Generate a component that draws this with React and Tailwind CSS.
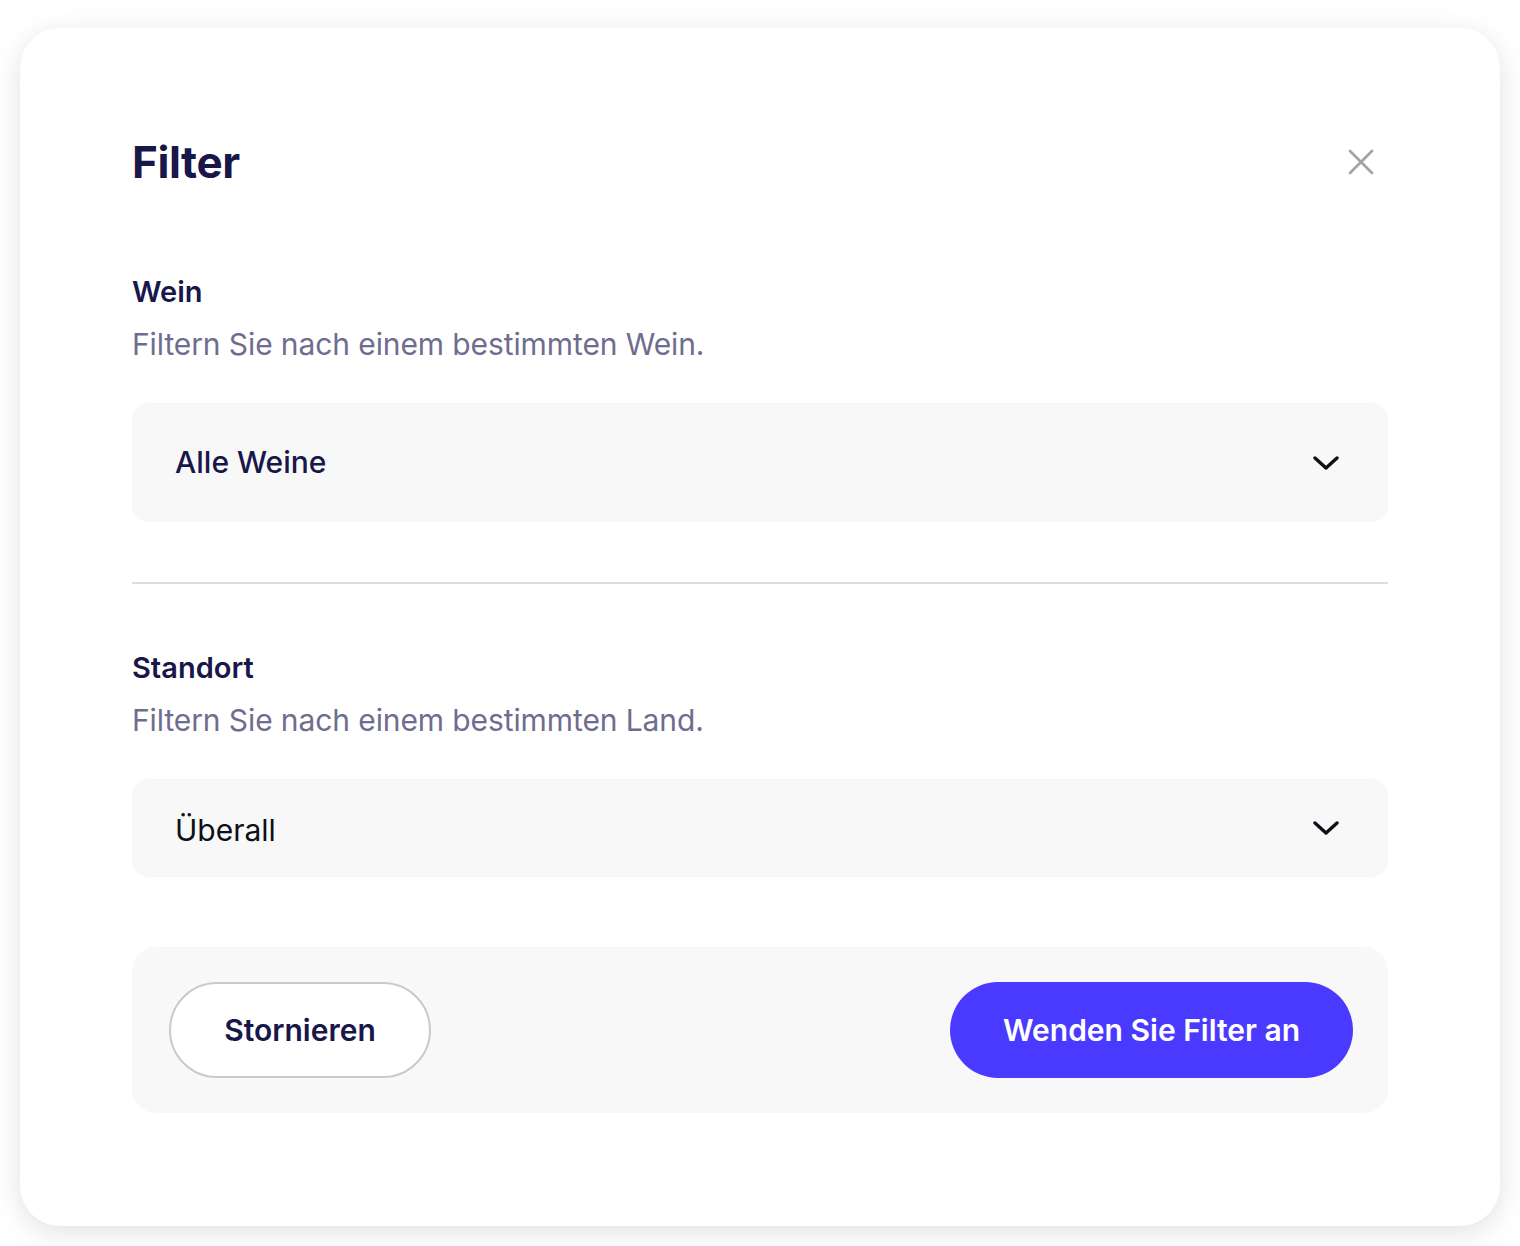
import React from "react";

function Chevron() {
    return (
        <svg width="26" height="14" viewBox="0 0 26 14" fill="none" className="shrink-0">
            <path d="M2 2 13 12 24 2" stroke="#0f0f1a" strokeWidth="3.4" strokeLinecap="round" strokeLinejoin="round" />
        </svg>
    );
}

function CloseIcon() {
    return (
        <svg width="26" height="26" viewBox="0 0 26 26" fill="none">
            <path d="M2 2 24 24M24 2 2 24" stroke="#a3a3ab" strokeWidth="2.8" strokeLinecap="round" />
        </svg>
    );
}

function Section({ label, hint, children }) {
    return (
        <div>
            <div className="text-[29px] leading-[36px] font-semibold text-[#19164a]">{label}</div>
            <div className="mt-[16px] text-[30px] leading-[36px] text-[#6f6d8f] tracking-[-0.1px]">{hint}</div>
            {children}
        </div>
    );
}

export default function App() {
    return (
        <div className="min-h-[1246px] bg-white pt-[28px] px-[20px] pb-[20px]" style={{ fontFamily: "Inter, 'Liberation Sans', sans-serif" }}>
            <div className="rounded-[40px] bg-white shadow-[0_6px_28px_rgba(0,0,0,0.12)] px-[112px] pt-[108px] pb-[113px]">
                {/* Header */}
                <div className="flex items-center justify-between h-[52px]">
                    <h1 className="text-[44px] leading-[52px] font-bold text-[#19164a] tracking-[-0.4px]">Filter</h1>
                    <button className="mr-[14px]"><CloseIcon /></button>
                </div>

                {/* Wein */}
                <div className="mt-[86px]">
                    <Section label="Wein" hint="Filtern Sie nach einem bestimmten Wein.">
                        <div className="mt-[41px] h-[119px] rounded-[16px] bg-[#f8f8f8] pl-[43px] pr-[49px] flex items-center justify-between">
                            <span className="text-[30px] font-medium text-[#19164a]">Alle Weine</span>
                            <Chevron />
                        </div>
                    </Section>
                </div>

                <div className="mt-[60px] h-[2px] bg-[#dddde0]" />

                {/* Standort */}
                <div className="mt-[66px]">
                    <Section label="Standort" hint="Filtern Sie nach einem bestimmten Land.">
                        <div className="mt-[41px] h-[98px] rounded-[16px] bg-[#f8f8f8] pl-[43px] pr-[49px] flex items-center justify-between">
                            <span className="text-[30px] text-[#0f0f1a] mt-[4px]">Überall</span>
                            <Chevron />
                        </div>
                    </Section>
                </div>

                {/* Footer */}
                <div className="mt-[70px] rounded-[24px] bg-[#f8f8f8] pl-[37px] pr-[35px] py-[35px] flex items-center justify-between">
                    <button className="h-[96px] w-[262px] rounded-full border-2 border-[#c9c9ce] bg-white text-[30px] font-semibold text-[#19164a]">
                        Stornieren
                    </button>
                    <button className="h-[96px] w-[403px] rounded-full bg-[#4a3aff] text-[30px] font-semibold text-white">
                        Wenden Sie Filter an
                    </button>
                </div>
            </div>
        </div>
    );
}
